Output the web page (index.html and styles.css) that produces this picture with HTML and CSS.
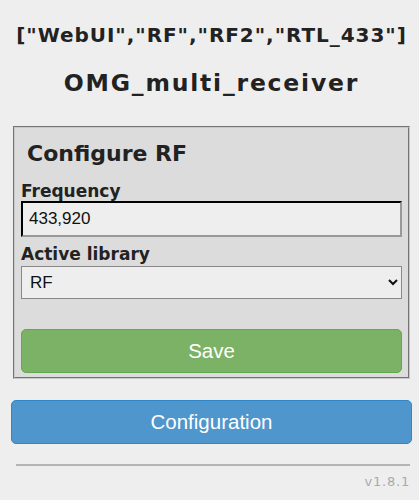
FILE: index.html
```html
<!DOCTYPE html>
<html lang="en">
<head>
  <meta charset="UTF-8">
  <meta name="viewport" content="width=device-width, initial-scale=1.0">
  <title>OMG_multi_receiver - Configure RF</title>
  <link rel="stylesheet" href="styles.css">
</head>
<body>
  <div class="page">
    <h3 class="modules">["WebUI","RF","RF2","RTL_433"]</h3>
    <h2 class="device">OMG_multi_receiver</h2>

    <fieldset class="panel">
      <div class="panel-title">Configure RF</div>
      <form id="rf-form">
        <label for="freq">Frequency</label>
        <input type="text" id="freq" name="freq" value="433,920">
        <label for="lib">Active library</label>
        <select id="lib" name="lib">
          <option>RF</option>
          <option>RF2</option>
          <option>RTL_433</option>
        </select>
        <button type="submit" class="btn btn-save">Save</button>
      </form>
    </fieldset>

    <button class="btn btn-config">Configuration</button>
    <hr>
    <div class="version">v1.8.1</div>
  </div>
</body>
</html>
```

FILE: styles.css
```css
body {
  margin: 0;
  background: #eee;
  color: #222;
  font-family: "DejaVu Sans", Verdana, sans-serif;
}
.page {
  padding: 0 7px 0 11px;
}
.modules {
  margin: 23px 0 0;
  font-size: 20px;
  line-height: 24px;
  letter-spacing: 0.95px;
  text-align: center;
}
.device {
  margin: 23px 0 0;
  font-size: 23.5px;
  line-height: 27px;
  letter-spacing: 1.8px;
  text-align: center;
}
.panel {
  margin: 29px 2px 0;
  padding: 13px 6px 4px;
  background: #dcdcdc;
  border: 2px groove #c8c8c8;
}
.panel-title {
  font-size: 22px;
  line-height: 26px;
  font-weight: bold;
  padding-left: 6px;
}
form label {
  display: block;
  font-size: 17px;
  line-height: 19px;
  font-weight: bold;
}
form label:first-child {
  margin-top: 15px;
}
form input {
  display: block;
  width: 100%;
  box-sizing: border-box;
  height: 36px;
  margin: 0 0 8px;
  padding: 4px 6px;
  font-family: "Liberation Sans", Arial, sans-serif;
  font-size: 17px;
  color: #111;
  background: #eee;
  border: 2px inset #999;
  border-top-color: #222;
  border-left-color: #222;
}
form select {
  display: block;
  width: 100%;
  height: 33px;
  margin: 2px 0 30px;
  padding: 0 4px;
  font-family: "Liberation Sans", Arial, sans-serif;
  font-size: 17px;
  color: #111;
  background: #eee;
  border: 1px solid #888;
  border-radius: 0;
}
.btn {
  display: block;
  width: 100%;
  height: 44px;
  border-radius: 5px;
  color: #fff;
  font-family: "Liberation Sans", Arial, sans-serif;
  font-size: 20.5px;
  cursor: pointer;
}
.btn-save {
  background: #7bb266;
  border: 1px solid #62a84c;
}
.btn-config {
  margin-top: 21px;
  height: 44px;
  background: #4f96cc;
  border: 1px solid #2f86c8;
}
hr {
  margin: 20px 2px 0 5px;
  border: 0;
  border-top: 2px solid #b4b4b4;
}
.version {
  margin-top: 8px;
  padding-right: 2px;
  text-align: right;
  font-size: 13px;
  letter-spacing: 0.8px;
  color: #aaa;
}
```
